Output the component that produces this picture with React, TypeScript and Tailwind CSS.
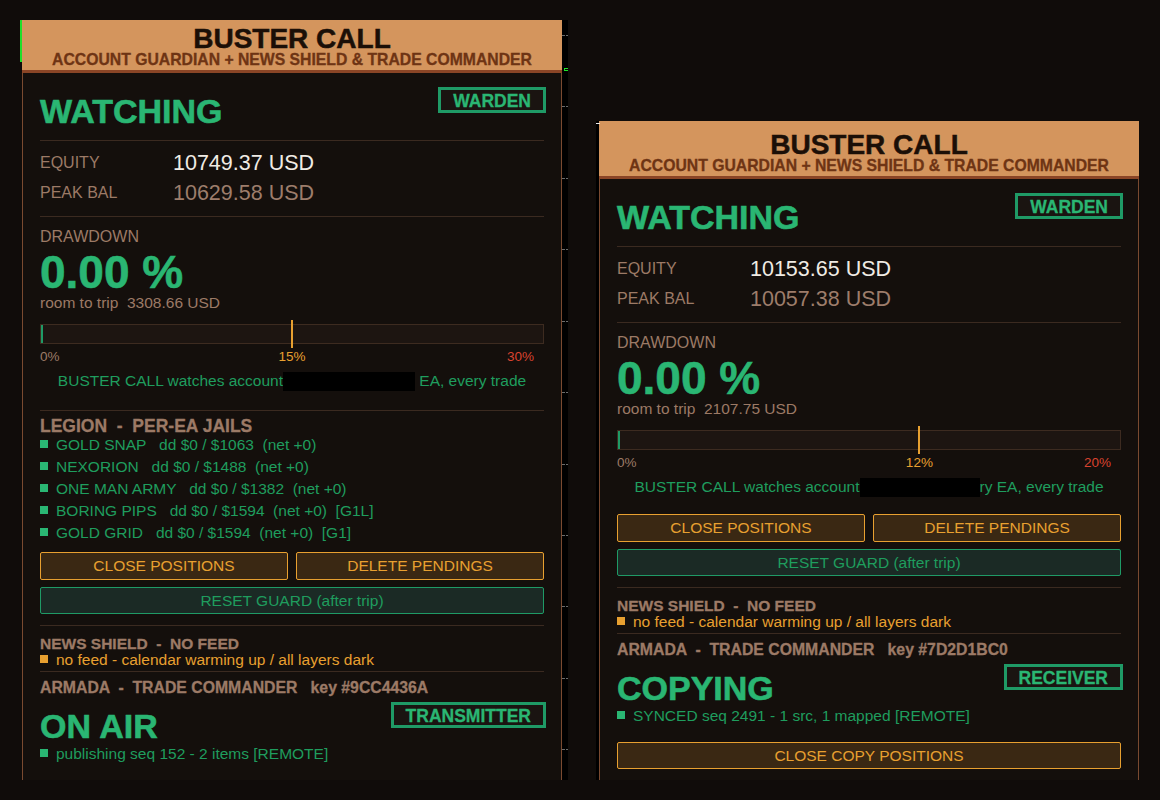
import React from 'react';

type Jail = { name: string; dd: string };

type PanelProps = {
  tall?: boolean;
  equity: string;
  peak: string;
  room: string;
  warn: number;
  trip: number;
  maskW: number;
  tail: string;
  jails?: Jail[];
  armadaKey: string;
  mode: 'tx' | 'rx';
};

const legion: Jail[] = [
  { name: 'GOLD SNAP', dd: 'dd $0 / $1063  (net +0)' },
  { name: 'NEXORION', dd: 'dd $0 / $1488  (net +0)' },
  { name: 'ONE MAN ARMY', dd: 'dd $0 / $1382  (net +0)' },
  { name: 'BORING PIPS', dd: 'dd $0 / $1594  (net +0)  [G1L]' },
  { name: 'GOLD GRID', dd: 'dd $0 / $1594  (net +0)  [G1]' },
];

// chart grid ticks that show through the black gutter
const ticks = [15, 86, 158, 229, 301, 372, 444, 515, 586, 658, 729];

const Divider = () => <div className="h-px bg-[#3b2a20]" />;

function StatusRow({ label, badge }: { label: string; badge: string }) {
  return (
    <div className="flex items-start justify-between">
      <div className="mt-[7px] text-[34px] font-bold leading-[34px] text-[#2ab673] [-webkit-text-stroke:0.6px_#2ab673]">
        {label}
      </div>
      <div className="-mr-[2px] flex h-[26px] items-center border-[3px] border-[#1f9a66] bg-[#1a1411] px-[12px] text-[17.5px] font-bold leading-none text-[#2ab673] [-webkit-text-stroke:0.3px_#2ab673]">
        <span className="translate-y-[2px]">{badge}</span>
      </div>
    </div>
  );
}

function Bullet({ dot, text, children }: { dot: string; text: string; children: React.ReactNode }) {
  return (
    <div className={`flex items-center gap-[8px] text-[15.5px] ${text}`}>
      <span className={`h-[8px] w-[8px] shrink-0 -translate-y-[1px] ${dot}`} />
      <span className="whitespace-pre">{children}</span>
    </div>
  );
}

function Panel(p: PanelProps) {
  const pos = (p.warn / p.trip) * 100;
  return (
    <div className="w-[540px]">
      <div
        className={`flex flex-col items-center justify-end border-b-[3px] border-[#8a4526] bg-[#d4955d] pb-[3px] ${
          p.tall ? 'h-[58px]' : 'h-[53px]'
        }`}
      >
        <div className="text-[28px] font-bold leading-[24px] text-[#1b0f07] [-webkit-text-stroke:0.5px_#1b0f07]">
          BUSTER CALL
        </div>
        <div className="mt-[1px] text-[15.75px] font-bold leading-[15px] text-[#6e3414] [-webkit-text-stroke:0.3px_#6e3414]">
          ACCOUNT GUARDIAN + NEWS SHIELD &amp; TRADE COMMANDER
        </div>
      </div>

      <div className={`border-x border-[#7a4a30] bg-[#140f0c] px-[17px] ${p.tall ? 'h-[601px]' : 'h-[707px]'}`}>
        <div className="pt-[14px]">
          <StatusRow label="WATCHING" badge="WARDEN" />
        </div>
        <div className="mt-[12px]">
          <Divider />
        </div>

        <div className="pt-[7px] text-[16px]">
          <div className="flex h-[30px] items-center">
            <span className="w-[133px] text-[#9c7a66]">EQUITY</span>
            <span className="text-[21.5px] text-[#f0ebe4]">{p.equity}</span>
          </div>
          <div className="flex h-[30px] items-center">
            <span className="w-[133px] text-[#9c7a66]">PEAK BAL</span>
            <span className="text-[21.5px] text-[#9d7d6b]">{p.peak}</span>
          </div>
        </div>
        <div className="mt-[8px]">
          <Divider />
        </div>

        <div className="mt-[11px] text-[16px] leading-[18px] text-[#9c7a66]">DRAWDOWN</div>
        <div className="mt-[4px] text-[46px] font-bold leading-[44px] text-[#2ab673] [-webkit-text-stroke:0.6px_#2ab673]">
          0.00 %
        </div>
        <div className="whitespace-pre text-[15.5px] leading-[18px] text-[#9c7a66]">room to trip  {p.room}</div>

        <div className="relative mt-[12px] h-[20px] border border-[#3d2b20] bg-[#1d1511]">
          <div className="absolute left-0 top-0 h-full w-[2px] bg-[#1f9a66]" />
          <div className="absolute -top-[5px] h-[28px] w-[2px] -translate-x-1/2 bg-[#e8a030]" style={{ left: `${pos}%` }} />
        </div>
        <div className="relative mt-[6px] h-[14px] text-[13.5px] leading-[14px]">
          <span className="absolute left-0 text-[#9c7a66]">0%</span>
          <span className="absolute -translate-x-1/2 text-[#e8a030]" style={{ left: `${pos}%` }}>
            {p.warn}%
          </span>
          <span className="absolute right-[10px] text-[#d9432f]">{p.trip}%</span>
        </div>
        <div className="mt-[6px] whitespace-pre text-center text-[15.5px] leading-[22px] text-[#1f9d5e]">
          BUSTER CALL watches account
          <span className="inline-block h-[19px] bg-black align-[-5px]" style={{ width: p.maskW }} />
          {p.tail}
        </div>

        {p.jails ? (
          <>
            <div className="mt-[18px]">
              <Divider />
            </div>
            <div className="mt-[8px] whitespace-pre text-[17.5px] font-bold leading-[15px] text-[#9c7a66] [-webkit-text-stroke:0.3px_#9c7a66]">
              LEGION  -  PER-EA JAILS
            </div>
            <div className="leading-[22px]">
              {p.jails.map((j) => (
                <Bullet key={j.name} dot="bg-[#2ab673]" text="text-[#1f9d5e]">
                  {j.name}   {j.dd}
                </Bullet>
              ))}
            </div>
            <div className="mt-[8px]" />
          </>
        ) : (
          <div className="mt-[16px]" />
        )}

        <div className="grid grid-cols-2 gap-[8px]">
          <div className="flex h-[28px] items-center justify-center rounded-[2px] border border-[#e8a030] bg-[#3a2813] text-[15.5px] text-[#e8a030]">
            CLOSE POSITIONS
          </div>
          <div className="flex h-[28px] items-center justify-center rounded-[2px] border border-[#e8a030] bg-[#3a2813] text-[15.5px] text-[#e8a030]">
            DELETE PENDINGS
          </div>
        </div>
        <div className="mt-[7px] flex h-[27px] items-center justify-center rounded-[2px] border border-[#1f9a66] bg-[#1b2a25] text-[15.5px] text-[#1f9d5e]">
          RESET GUARD (after trip)
        </div>
        <div className="mt-[11px]">
          <Divider />
        </div>

        <div className="mt-[10px] whitespace-pre text-[15.5px] font-bold leading-[16px] text-[#9c7a66] [-webkit-text-stroke:0.3px_#9c7a66]">
          NEWS SHIELD  -  NO FEED
        </div>
        <div className="leading-[16px]">
          <Bullet dot="bg-[#e8a030]" text="text-[#e8a030]">
            no feed - calendar warming up / all layers dark
          </Bullet>
        </div>
        <div className="mt-[3px]">
          <Divider />
        </div>

        <div className="mt-[8px] whitespace-pre text-[15.8px] font-bold leading-[16px] text-[#9c7a66] [-webkit-text-stroke:0.3px_#9c7a66]">
          ARMADA  -  TRADE COMMANDER   key #{p.armadaKey}
        </div>
        <div className="mt-[6px]">
          {p.mode === 'tx' ? <StatusRow label="ON AIR" badge="TRANSMITTER" /> : <StatusRow label="COPYING" badge="RECEIVER" />}
        </div>
        <div className="leading-[22px]">
          <Bullet dot="bg-[#2ab673]" text="text-[#1f9d5e]">
            {p.mode === 'tx' ? 'publishing seq 152 - 2 items [REMOTE]' : 'SYNCED seq 2491 - 1 src, 1 mapped [REMOTE]'}
          </Bullet>
        </div>
        {p.mode === 'rx' && (
          <div className="mt-[15px] flex h-[27px] items-center justify-center rounded-[2px] border border-[#e8a030] bg-[#3a2813] text-[15.5px] text-[#e8a030]">
            CLOSE COPY POSITIONS
          </div>
        )}
      </div>
    </div>
  );
}

function Gutter({ h, w }: { h: string; w: string }) {
  return (
    <div className={`relative bg-black ${h} ${w}`}>
      {ticks.map((t) => (
        <div key={t} className="absolute left-0 flex w-full justify-between" style={{ top: t }}>
          <span className="h-px w-[3px] bg-[#6b6b6b]" />
          <span className="h-px w-[2px] bg-[#6b6b6b]" />
        </div>
      ))}
    </div>
  );
}

export default function App() {
  return (
    <div className="h-[800px] w-[1160px] overflow-hidden bg-[#100c0a] font-['Liberation_Sans',Arial,sans-serif]">
      <div className="flex items-start pl-[22px] pt-[20px]">
        <div className="relative flex">
          {/* chart selection bracket */}
          <div className="absolute -left-[2px] top-0 h-[42px] w-[2px] bg-[#1fe02a]" />
          <Panel
            equity="10749.37 USD"
            peak="10629.58 USD"
            room="3308.66 USD"
            warn={15}
            trip={30}
            maskW={132}
            tail=" EA, every trade"
            jails={legion}
            armadaKey="9CC4436A"
            mode="tx"
          />
          <div className="relative">
            <Gutter h="h-[760px]" w="w-[6px]" />
            <div className="absolute left-[2px] top-[48px] h-[3px] w-[4px] border-y border-l border-[#1fe02a]" />
          </div>
        </div>

        <div className="ml-[28px] mt-[101px] flex">
          <div className="relative">
            <div className="h-[659px] w-[3px] bg-black" />
            <div className="absolute left-0 top-[2px] h-px w-[4px] bg-[#e8e8e8]" />
          </div>
          <Panel
            tall
            equity="10153.65 USD"
            peak="10057.38 USD"
            room="2107.75 USD"
            warn={12}
            trip={20}
            maskW={120}
            tail="ry EA, every trade"
            armadaKey="7D2D1BC0"
            mode="rx"
          />
        </div>
      </div>
    </div>
  );
}
